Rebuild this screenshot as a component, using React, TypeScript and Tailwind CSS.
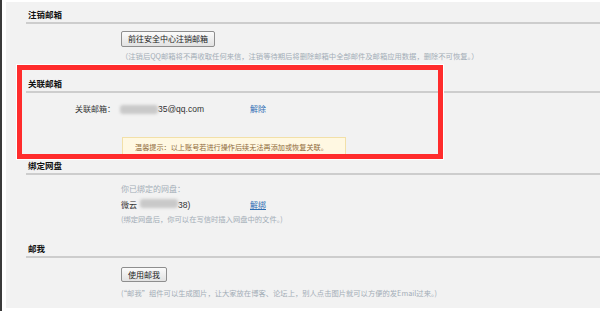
const font = "font-['Noto_Sans_CJK_SC','Noto_Sans',sans-serif]";

function Title({ text, className = "" }: { text: string; className?: string }) {
  return (
    <div className={className}>
      <div className="h-[16px] pl-[22px] text-[8.5px] font-bold leading-[16px] text-[#111]">{text}</div>
      <div className="ml-[20px] h-[2px] bg-[#cdcdcd]" />
    </div>
  );
}

function Btn({ text, className = "" }: { text: string; className?: string }) {
  return (
    <button
      className={`flex items-center rounded-[2px] border border-[#8e8e8e] bg-gradient-to-b from-[#fbfbfb] to-[#e2e2e2] px-[6px] text-[8px] text-[#222] ${className}`}
    >
      {text}
    </button>
  );
}

function Note({ text, className = "" }: { text: string; className?: string }) {
  return <div className={`h-[10px] whitespace-nowrap text-[7.3px] leading-[10px] text-[#a3adb7] ${className}`}>{text}</div>;
}

function Blur({ w }: { w: string }) {
  return <span className={`inline-block h-[9px] rounded-[3px] bg-[#c9c9c9] blur-[1.5px] ${w}`} />;
}

export default function App() {
  return (
    <div className={`relative h-[311px] w-[600px] overflow-hidden border-l-2 border-[#3a3a3a] bg-white pl-[4px] pt-[2px] ${font}`}>
      <div className="h-[306px] bg-[#f2f2f2]">
        {/* 注销邮箱 */}
        <Title text="注销邮箱" className="pt-[4px]" />
        <div className="pl-[115px]">
          <Btn text="前往安全中心注销邮箱" className="mt-[7px] h-[16px]" />
          <Note className="mt-[4px]" text="（注销后QQ邮箱将不再收取任何来信，注销等待期后将删除邮箱中全部邮件及邮箱应用数据，删除不可恢复。）" />
        </div>

        {/* 关联邮箱 */}
        <Title text="关联邮箱" className="mt-[14px]" />
        <div className="mt-[9px] flex h-[14px] items-center text-[8px] text-[#333]">
          <span className="w-[114px] pl-[69px]">关联邮箱：</span>
          <span className="flex w-[130px] items-center text-[8.5px] font-['Liberation_Sans',sans-serif] text-[#333]">
            <Blur w="w-[38px]" />
            <span>35@qq.com</span>
          </span>
          <span className="text-[#2f6fb4]">解除</span>
        </div>
        <div className="ml-[116px] mt-[21px] flex h-[20px] w-[224px] items-center border border-[#f2e0a8] bg-[#fff8e2] pl-[12px] text-[7.15px] text-[#8f6a3a]">
          温馨提示：以上账号若进行操作后续无法再添加或恢复关联。
        </div>

        {/* 绑定网盘 */}
        <Title text="绑定网盘" />
        <div className="pl-[115px]">
          <div className="mt-[8px] h-[12px] text-[8px] leading-[12px] text-[#a3adb7]">你已绑定的网盘：</div>
          <div className="mt-[4px] flex h-[12px] items-center text-[8px] text-[#333]">
            <span className="flex w-[129px] items-center">
              <span>微云</span>
              <span className="ml-[3px]"><Blur w="w-[38px]" /></span>
              <span className="font-['Liberation_Sans',sans-serif] text-[8.5px]">38)</span>
            </span>
            <span className="text-[#2f6fb4] underline">解绑</span>
          </div>
          <Note className="mt-[3px]" text="(绑定网盘后，你可以在写信时插入网盘中的文件。)" />
        </div>

        {/* 邮我 */}
        <Title text="邮我" className="mt-[16px]" />
        <div className="pl-[115px]">
          <Btn text="使用邮我" className="mt-[9px] h-[15px]" />
          <Note className="mt-[6px]" text="(“邮我”组件可以生成图片，让大家放在博客、论坛上，别人点击图片就可以方便的发Email过来。)" />
        </div>
      </div>

      {/* red annotation box */}
      <div className="absolute left-[15px] top-[65px] h-[94px] w-[426px] border-[5px] border-[#ff2c2c] outline outline-1 outline-white" />
    </div>
  );
}
